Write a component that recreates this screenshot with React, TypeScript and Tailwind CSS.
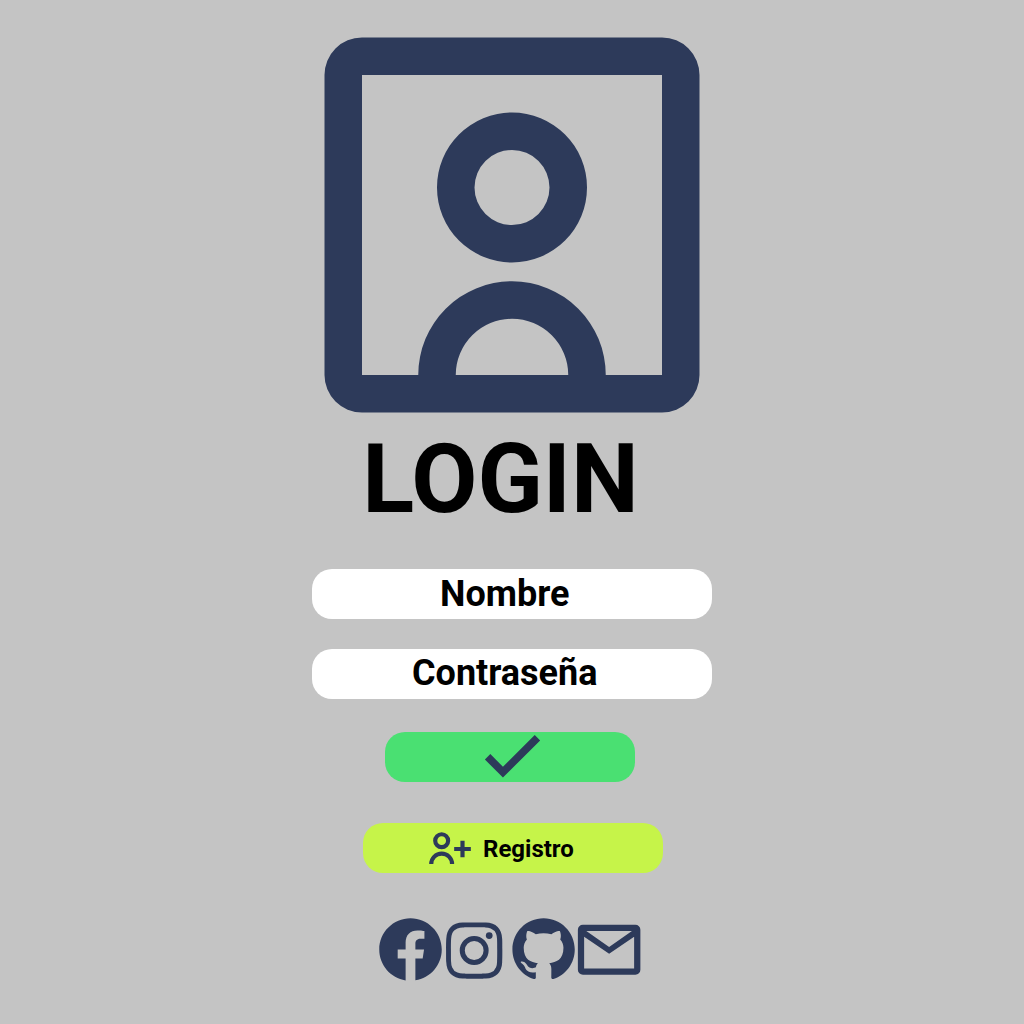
import {
  BiCheck,
  BiLogoFacebookCircle,
  BiLogoGithub,
  BiLogoInstagram,
} from "react-icons/bi";

function UserFrame() {
  return (
    <svg viewBox="0 0 24 24" className="h-[450px] w-[450px] shrink-0" fill="currentColor">
      <path
        fillRule="evenodd"
        d="M4 2h16a2 2 0 0 1 2 2v16a2 2 0 0 1-2 2H4a2 2 0 0 1-2-2V4a2 2 0 0 1 2-2zM4 4v16h3a5 5 0 0 1 10 0h3V4zM9 20h6a3 3 0 0 0-6 0z"
      />
      <path
        fillRule="evenodd"
        d="M12 6a4 4 0 1 0 0 8 4 4 0 0 0 0-8zm0 2a2 2 0 1 1 0 4 2 2 0 0 1 0-4z"
      />
    </svg>
  );
}

function UserPlus() {
  return (
    <svg viewBox="0 0 24 24" className="mt-px h-[50px] w-[50px] shrink-0" fill="none" stroke="currentColor" strokeWidth="2">
      <circle cx="8" cy="8" r="3.1" />
      <path d="M3 19.2a5 5 0 0 1 10 0M18 8v8M14 12h8" />
    </svg>
  );
}

function Envelope() {
  return (
    <svg viewBox="0.12 -0.08 24 24" className="-ml-[9px] h-[75px] w-[75px] shrink-0" fill="currentColor">
      <path
        fillRule="evenodd"
        d="M3.6 4h16.8A1.6 1.6 0 0 1 22 5.6v12.8a1.6 1.6 0 0 1-1.6 1.6H3.6A1.6 1.6 0 0 1 2 18.4V5.6A1.6 1.6 0 0 1 3.6 4zM4.7 6l7.3 5.1L19.3 6zM4 7.8V18h16V7.8l-8 5.5z"
      />
    </svg>
  );
}

function Field({ label, className, textClassName }: { label: string; className: string; textClassName: string }) {
  return (
    <div className={`flex h-[50px] w-[400px] justify-center rounded-[20px] bg-white pr-[14.5px] ${className}`}>
      <span className={`text-4xl font-bold text-black ${textClassName}`}>{label}</span>
    </div>
  );
}

export default function App() {
  return (
    <main className="flex h-[1024px] w-[1024px] flex-col items-center overflow-hidden bg-[#c4c4c4] font-['Roboto',sans-serif] text-[#2d3a5a]">
      <UserFrame />
      <h1 className="-mt-[27px] mr-[23px] text-8xl leading-[112px] font-bold text-black">LOGIN</h1>
      <Field label="Nombre" className="mt-[34px]" textClassName="leading-[50px]" />
      <Field label="Contraseña" className="mt-[30px]" textClassName="leading-[48px]" />
      <button className="mt-[33px] mr-1 flex h-[50px] w-[250px] items-center justify-center rounded-[20px] bg-[#4ae072]">
        <BiCheck viewBox="-0.16 0 24 24" className="mb-2 h-[92px] w-[92px] shrink-0" />
      </button>
      <button className="mt-[41px] ml-[2px] flex h-[50px] w-[300px] shrink-0 items-center rounded-[20px] bg-[#c6f449] pl-[62px]">
        <UserPlus />
        <span className="mt-[2px] ml-2 text-2xl leading-[50px] font-bold text-black">Registro</span>
      </button>
      <nav className="mt-[39px] flex w-[278px] shrink-0 justify-start">
        <BiLogoFacebookCircle className="h-[75px] w-[75px] shrink-0" />
        <BiLogoInstagram viewBox="0.1 0 24 24" className="mt-px -ml-[11px] h-[75px] w-[75px] shrink-0" />
        <BiLogoGithub className="-ml-[6px] h-[75px] w-[75px] shrink-0" />
        <Envelope />
      </nav>
    </main>
  );
}
